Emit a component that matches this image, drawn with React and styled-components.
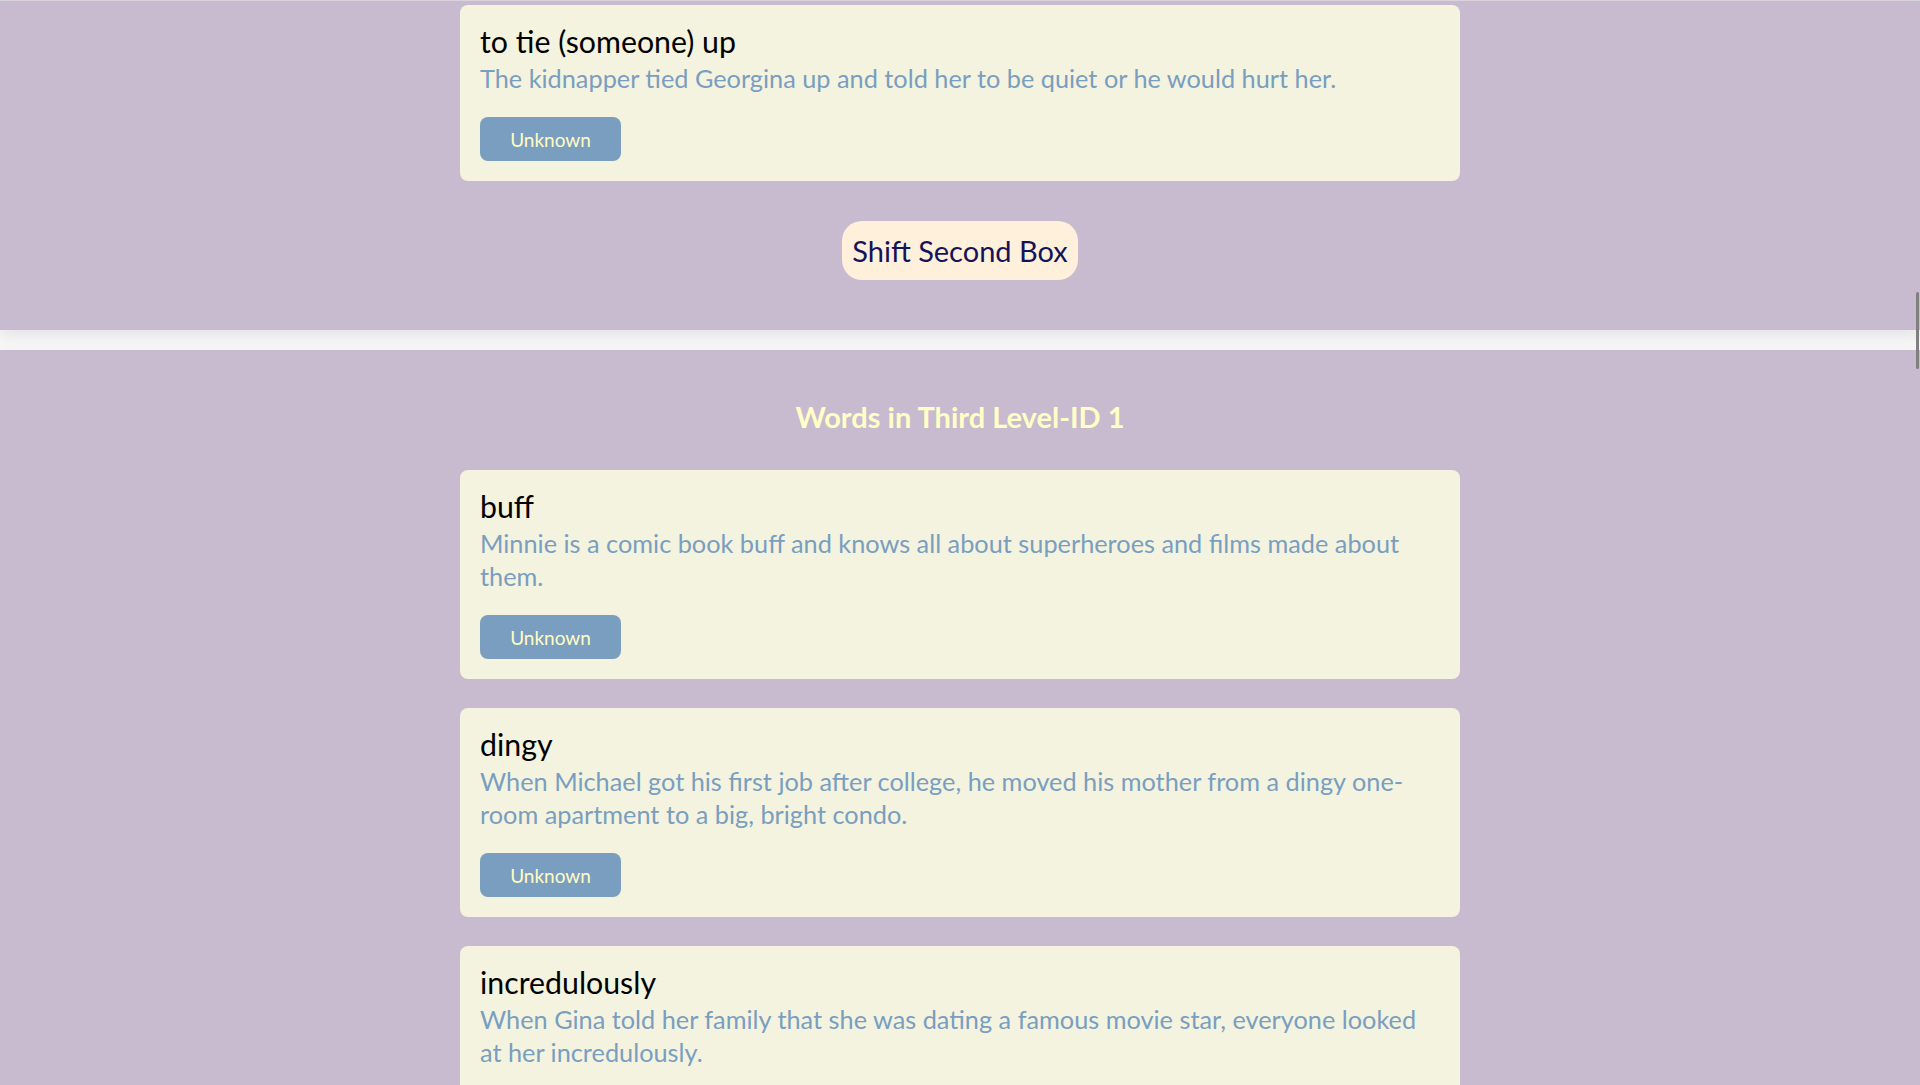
import styled, { createGlobalStyle } from "styled-components";

const GlobalStyle = createGlobalStyle`
	html, body {
		margin: 0;
		padding: 0;
		background-color: #f8f8f8;
		font-family: Lato, "Open Sans", sans-serif;
		overflow: hidden;
	}
`;

const firstWords = [
	{
		word: "to tie (someone) up",
		example: "The kidnapper tied Georgina up and told her to be quiet or he would hurt her.",
	},
];

const thirdWords = [
	{
		word: "buff",
		example: "Minnie is a comic book buff and knows all about superheroes and films made about them.",
	},
	{
		word: "dingy",
		example:
			"When Michael got his first job after college, he moved his mother from a dingy one-room apartment to a big, bright condo.",
	},
	{
		word: "incredulously",
		example:
			"When Gina told her family that she was dating a famous movie star, everyone looked at her incredulously.",
	},
];

function WordCard({ word, example }) {
	return (
		<Card>
			<Word>{word}</Word>
			<Example>{example}</Example>
			<StatusButton>Unknown</StatusButton>
		</Card>
	);
}

export default function App() {
	return (
		<>
			<GlobalStyle />
			<Page>
				<Section $top={4} $bottom={50}>
					{firstWords.map((w) => (
						<WordCard key={w.word} {...w} />
					))}
					<ShiftButton>Shift Second Box</ShiftButton>
				</Section>
				<Section $top={49} $bottom={40}>
					<Heading>Words in Third Level-ID 1</Heading>
					<CardList>
						{thirdWords.map((w) => (
							<WordCard key={w.word} {...w} />
						))}
					</CardList>
				</Section>
			</Page>
			<ScrollThumb />
		</>
	);
}

const Page = styled.div`
	border-top: 1px solid #dcd6df;
	display: flex;
	flex-direction: column;
	gap: 20px;
	min-height: 100vh;
	background-color: #f8f8f8;
`;

const Section = styled.section`
	background-color: #c8bbd0;
	padding: ${(p) => p.$top}px 0 ${(p) => p.$bottom}px;
	display: flex;
	flex-direction: column;
	align-items: center;
	box-shadow: 0 6px 14px rgba(60, 40, 70, 0.1);
`;

const CardList = styled.div`
	display: flex;
	flex-direction: column;
	gap: 29px;
`;

const Card = styled.div`
	width: 1000px;
	box-sizing: border-box;
	padding: 20px;
	background-color: #f4f3df;
	border-radius: 8px;
	display: flex;
	flex-direction: column;
	align-items: flex-start;
`;

const Word = styled.div`
	font-size: 30.3px;
	line-height: 32px;
	color: #000;
	margin-bottom: 5px;
`;

const Example = styled.div`
	font-size: 25.3px;
	line-height: 33px;
	color: #799ec0;
	margin-bottom: 22px;
`;

const StatusButton = styled.button`
	font-family: Lato, sans-serif;
	font-size: 19px;
	color: #fffcc4;
	background-color: #799ebf;
	border: none;
	border-radius: 8px;
	width: 141px;
	height: 44px;
	padding: 0;
	cursor: pointer;
`;

const ShiftButton = styled.button`
	margin-top: 40px;
	font-family: Lato, sans-serif;
	font-size: 29px;
	color: #14145a;
	background-color: #fff0dc;
	border: none;
	border-radius: 20px;
	height: 59px;
	padding: 0 10px;
	cursor: pointer;
`;

const Heading = styled.h2`
	margin: 0 0 36px;
	font-size: 29px;
	font-weight: 700;
	color: #fffec6;
`;

const ScrollThumb = styled.div`
	position: fixed;
	right: 1px;
	top: 292px;
	width: 3px;
	height: 77px;
	border-radius: 2px;
	background-color: #808080;
`;
